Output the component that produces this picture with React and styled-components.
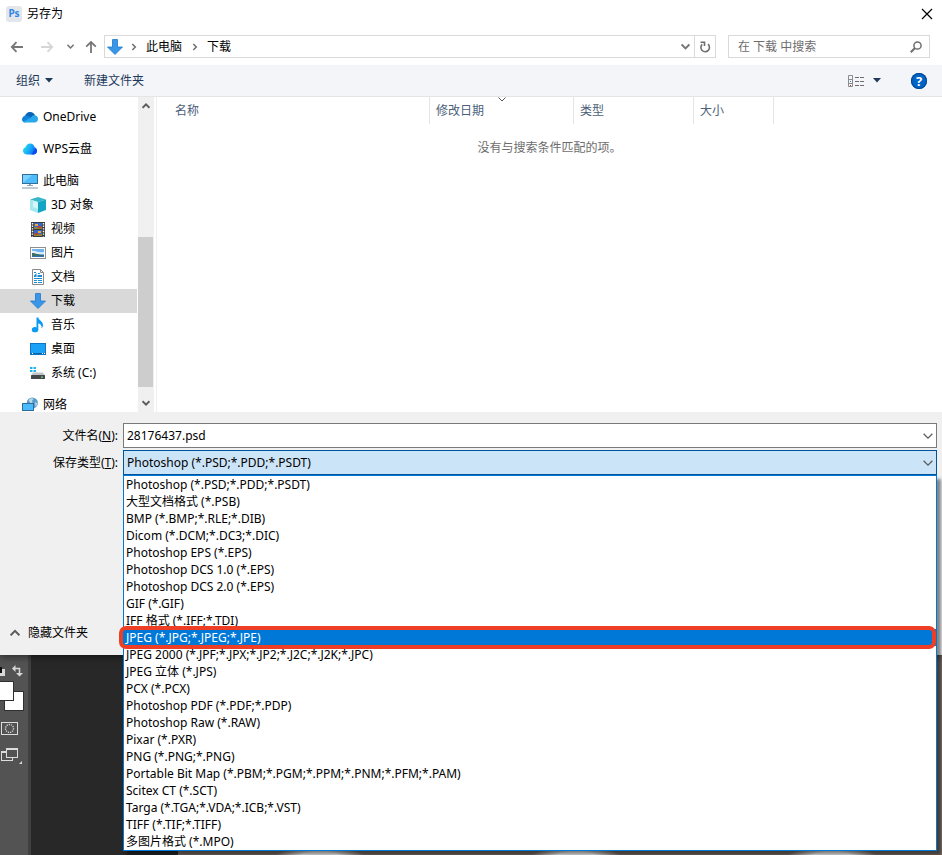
import React, { useState } from "react";
import styled, { createGlobalStyle, css } from "styled-components";

const GlobalStyle = createGlobalStyle`
    * {
        box-sizing: border-box;
    }
    body {
        margin: 0;
        background: #282828;
    }
    body, button, input, select {
        font-family: "Noto Sans", "Noto Sans CJK SC", sans-serif;
        font-size: 12px;
        line-height: 16px;
        color: #000000;
    }
    button {
        border: none;
        background: none;
        padding: 0;
        display: flex;
        align-items: center;
        justify-content: center;
    }
    svg {
        display: block;
        flex-shrink: 0;
    }
`

const Page = styled.div`
    display: flex;
    flex-direction: column;
    min-height: 100vh;
`

const Dialog = styled.main`
    position: relative;
    z-index: 1;
    background: #ffffff;
    box-shadow: 0 1px 8px rgba(0, 0, 0, 0.6);
`

const TitleBar = styled.header`
    display: flex;
    align-items: center;
    height: 28px;
    padding: 0 8px 0 6px;
`

const PsBadge = styled.span`
    width: 16px;
    height: 16px;
    border-radius: 3px;
    background: #e3e6ea;
    color: #2f86e8;
    font-size: 10px;
    font-weight: 700;
    line-height: 15px;
    text-align: center;
`

const Title = styled.h1`
    flex: 1;
    margin: 0 0 0 5px;
    font-size: 12px;
    font-weight: 400;
`

const NavBar = styled.nav`
    display: flex;
    align-items: center;
    height: 37px;
    padding: 0 12px 0 8px;
`

const NavButton = styled.button`
    width: ${(props) => props.$width || 18}px;
    height: 20px;
    margin-right: ${(props) => props.$gap || 0}px;
`

const AddressBar = styled.div`
    display: flex;
    align-items: center;
    flex: 1;
    height: 23px;
    padding-left: 2px;
    border: 1px solid #d9d9d9;
`

const Crumb = styled.a`
    padding: 0 2px;
    color: #000000;
    text-decoration: none;
`

const CrumbArrow = styled.span`
    display: flex;
    justify-content: center;
    width: 21px;
`

const Refresh = styled.button`
    width: 21px;
    height: 21px;
    border-left: 1px solid #d9d9d9;
`

const SearchBox = styled.form`
    display: flex;
    align-items: center;
    width: 202px;
    height: 23px;
    margin-left: 12px;
    padding: 0 6px 0 9px;
    border: 1px solid #d9d9d9;
`

const SearchInput = styled.input`
    flex: 1;
    min-width: 0;
    padding: 0;
    border: none;
    outline: none;
    &::placeholder {
        color: #6d6d6d;
        opacity: 1;
    }
`

const Toolbar = styled.div`
    display: flex;
    align-items: center;
    height: 32px;
    padding: 0 15px 0 16px;
    background: #f4f5f8;
    border-bottom: 1px solid #e5e5e5;
`

const ToolButton = styled.button`
    gap: 5px;
    margin-right: ${(props) => props.$gap || 0}px;
    color: #1e395b;
`

const Spacer = styled.div`
    flex: 1;
`

const HelpButton = styled.button`
    width: 16px;
    height: 16px;
    border-radius: 50%;
    background: #0063c6;
    box-shadow: inset 0 0 0 1px #00458f;
    color: #ffffff;
    font-size: 13px;
    font-weight: 700;
`

const Content = styled.div`
    display: flex;
    height: 315px;
`

const Tree = styled.ul`
    width: 137px;
    margin: 0;
    padding: 8px 0 0;
    list-style: none;
    overflow: hidden;
`

const TreeItem = styled.li`
    margin-top: ${(props) => (props.$spaced ? 8 : 0)}px;
`

const TreeLink = styled.a`
    display: flex;
    align-items: center;
    gap: 5px;
    height: 24px;
    padding-left: ${(props) => (props.$nested ? 30 : 22)}px;
    color: #000000;
    text-decoration: none;
    white-space: nowrap;
    ${(props) => props.$active && css`
        background: #d9d9d9;
    `}
`

const ScrollTrack = styled.div`
    display: flex;
    flex-direction: column;
    width: 16px;
    margin: 0 2px 0 1px;
    background: #f0f0f0;
`

const ScrollButton = styled.button`
    width: 15px;
    height: 18px;
`

const ScrollThumb = styled.div`
    width: 15px;
    height: 150px;
    margin: auto 0 7px;
    background: #cdcdcd;
`

const FilePane = styled.section`
    flex: 1;
    border-left: 1px solid #f0f0f0;
`

const FileTable = styled.table`
    width: 100%;
    table-layout: fixed;
    border-collapse: separate;
    border-spacing: 0;
`

const Column = styled.th`
    position: relative;
    width: ${(props) => (props.$width ? `${props.$width}px` : "auto")};
    height: 27px;
    padding: 0 0 0 ${(props) => props.$indent || 6}px;
    border-right: ${(props) => (props.$width ? "1px solid #e5e5e5" : "none")};
    color: #4c607a;
    font-weight: 400;
    text-align: left;
`

const SortMark = styled.span`
    position: absolute;
    top: 0;
    left: 50%;
    margin-left: -4px;
`

const EmptyCell = styled.td`
    height: 48px;
    padding: 0;
    color: #6d6d6d;
    text-align: center;
`

const Footer = styled.form`
    display: flex;
    flex-direction: column;
    justify-content: space-between;
    min-height: 243px;
    padding: 11px 5px 12px 0;
    background: #f0f0f0;
`

const Fields = styled.div`
    display: grid;
    grid-template-columns: 118px 1fr;
    grid-auto-rows: 25px;
    align-items: center;
    gap: 2px 5px;
`

const Label = styled.label`
    text-align: right;
`

const Combo = styled.div`
    position: relative;
    display: flex;
    height: 25px;
    background: ${(props) => (props.$open ? "#cce4f7" : "#ffffff")};
    border: 1px solid ${(props) => (props.$open ? "#005499" : "#7a7a7a")};
`

const comboText = css`
    flex: 1;
    min-width: 0;
    padding: 0 3px;
    border: none;
    outline: none;
    background: none;
    appearance: none;
`

const NameInput = styled.input`
    ${comboText}
`

const TypeSelect = styled.select`
    ${comboText}
`

const ComboArrow = styled.span`
    display: flex;
    align-items: center;
    padding-right: 3px;
    pointer-events: none;
`

// drops over the dialog and whatever is under it
const TypeList = styled.ul`
    position: absolute;
    top: 24px;
    left: -1px;
    right: -1px;
    margin: 0;
    padding: 0;
    border: 1px solid #0078d7;
    background: #ffffff;
    box-shadow: 4px 4px 3px rgba(0, 0, 0, 0.45);
    list-style: none;
`

const TypeOption = styled.li`
    position: relative;
    height: 17px;
    padding-left: 2px;
    line-height: 17px;
    white-space: nowrap;
    ${(props) => props.$active && css`
        z-index: 1;
        background: #0078d7;
        color: #ffffff;
        &::after {
            content: "";
            position: absolute;
            top: -3px;
            bottom: -3px;
            left: -5px;
            right: 0;
            border: 4px solid #ee3f26;
            border-radius: 7px;
        }
    `}
`

const HideFolders = styled.button`
    align-self: flex-start;
    gap: 8px;
    height: 20px;
    margin-left: 10px;
`

const Workspace = styled.div`
    display: flex;
    flex: 1;
    min-height: 200px;
`

const ToolStrip = styled.aside`
    display: flex;
    flex-direction: column;
    width: 31px;
    padding-top: 6px;
    background: #535353;
    border-right: 3px solid #404040;
`

const StripButton = styled.button`
    justify-content: flex-start;
    margin-bottom: ${(props) => props.$gap || 0}px;
`

const Pasteboard = styled.div`
    width: 147px;
    background: #282828;
`

const Photo = styled.div`
    flex: 1;
    background:
        radial-gradient(ellipse 44px 7px at 50% 100%, #ffffff 40%, transparent) 14px 100% / 256px 100% repeat-x,
        #7d6e66;
`

const Chevron = ({ d, size = 8, color = "#5a5a5a", width = 1.5 }) => (
    <svg width={size} height={size} viewBox="0 0 8 8" fill="none" stroke={color} strokeWidth={width}>
        <path d={d} />
    </svg>
)

const DOWN = "M0.5 2.2 4 5.7 7.5 2.2"
const UP = "M0.5 5.8 4 2.3 7.5 5.8"
const RIGHT = "M2.3 1 5.3 4 2.3 7"

const Caret = () => (
    <svg width="8" height="5" viewBox="0 0 8 5">
        <path d="M0 0h8L4 4.6z" fill="#1e395b" />
    </svg>
)

const ArrowIcon = ({ d, color = "#767676" }) => (
    <svg width="14" height="14" viewBox="0 0 14 14" fill="none" stroke={color} strokeWidth="1.8">
        <path d={d} />
    </svg>
)

const Icon = ({ children }) => (
    <svg width="16" height="16" viewBox="0 0 16 16">{children}</svg>
)

const DownloadIcon = () => (
    <Icon>
        <path d="M5.5 0.5h5v7.5h5L8 15.5 0.5 8h5z" fill="#3a96e8" stroke="#2079c9" strokeWidth="0.8" />
    </Icon>
)

const OneDriveIcon = () => (
    <Icon>
        <path d="M3 8C3 5 5.500 3 8.300 3c2.200 0 4 1.300 4.700 3.200L9 9z" fill="#0a64b8" />
        <path d="M0 10.500C0 8.200 1.800 6.500 4 6.500c1 0 1.800.3 2.500.8L11 10l-8 3.500C1 13.300 0 12 0 10.500z" fill="#1181da" />
        <path d="M12.500 6.200c2 0 3.500 1.700 3.500 3.700s-1.500 3.600-3.500 3.600H3.500c-1 0-1.800-.3-2.400-.8L9 8.500c1-1.400 2-2.300 3.500-2.300z" fill="#28a8ea" />
    </Icon>
)

const WpsIcon = () => (
    <Icon>
        <defs>
            <linearGradient id="wps" x1="0" y1="0.3" x2="1" y2="0.7">
                <stop offset="0" stopColor="#27e0e8" />
                <stop offset="0.55" stopColor="#14a0f8" />
                <stop offset="1" stopColor="#0b4df0" />
            </linearGradient>
        </defs>
        <path d="M5.200 13.500C2.800 13.500 1 11.900 1 9.700 1 8 2 6.800 3.500 6.300 4.200 4 6 2.500 8.200 2.500c2.300 0 3.900 1.500 4.400 3.700 1.500.6 2.400 1.900 2.400 3.500 0 2.200-1.700 3.800-4 3.800z" fill="url(#wps)" />
        <path d="M9.500 13.500 13.200 7.500c1.200.5 1.800 1.300 1.800 2.600 0 2-1.500 3.400-4 3.400z" fill="#0a4cf0" />
    </Icon>
)

const ComputerIcon = () => (
    <Icon>
        <rect x="0.500" y="1.500" width="15" height="9" fill="#4dbcfb" stroke="#2f6f9e" />
        <path d="M1 10V2h9z" fill="#7ed2ff" />
        <path d="M7 11h2v1h2v1H5v-1h2z" fill="#8ba3b5" />
        <path d="M0 15.500v-1h16v1z" fill="#7f97ab" />
    </Icon>
)

const CubeIcon = () => (
    <Icon>
        <path d="M8 0l8 2.500L8 5 0 2.500z" fill="#35b6c9" />
        <path d="M0 2.500 8 5v11l-8-3z" fill="#a5e8ef" />
        <path d="M16 2.500 8 5v11l8-3z" fill="#15a5c4" />
        <path d="M3 4 8 5.500V12L3 10z" fill="#d5f6f9" />
    </Icon>
)

const VideoIcon = () => (
    <Icon>
        <rect x="1" y="1" width="14" height="15" fill="#3b3b3b" />
        <path d="M2.500 2v13.500M13.500 2v13.500" stroke="#ffffff" strokeWidth="1.400" strokeDasharray="1.400 1.200" />
        <rect x="4" y="2" width="8" height="6" fill="#3467c8" />
        <rect x="4" y="9" width="8" height="6" fill="#3467c8" />
        <path d="M5 3h3v2H5zM8 10h3v2H8z" fill="#f1a92c" />
        <path d="M4 6h8v2H4zM4 13h8v2H4z" fill="#8d8340" />
        <path d="M8 5h3v2H8zM5 12h3v2H5z" fill="#c53c2c" />
    </Icon>
)

const PictureIcon = () => (
    <Icon>
        <rect x="0.500" y="2.500" width="15" height="11" fill="#ffffff" stroke="#8f8f8f" />
        <rect x="2" y="4" width="12" height="8" fill="#6fb2ee" />
        <path d="M2 6c3-1 5 2 12 1v2H2z" fill="#dff0fb" />
        <path d="M2 8c4 0 6 2 12 2v2H2z" fill="#3c6f66" />
        <path d="M2 11h12v1H2z" fill="#3070b0" />
    </Icon>
)

const DocumentIcon = () => (
    <Icon>
        <path d="M2.500 0.500h8l3 3v12h-11z" fill="#ffffff" stroke="#8a8a8a" />
        <path d="M10.500 0.500v3h3" fill="none" stroke="#8a8a8a" />
        <path d="M4 3.500h2M8 4.500h2M4 9.500h8M4 11.500h3M8 11.500h4M4 13.500h3M8 13.500h4" stroke="#1b8fd6" />
        <path d="M4 8V6.500L6.500 4v4zM7.500 6H12v2H7.500z" fill="#1b8fd6" />
    </Icon>
)

const MusicIcon = () => (
    <Icon>
        <ellipse cx="5" cy="12.700" rx="3.200" ry="2.600" fill="#0b9bf5" />
        <path d="M6.500 0.500h1.800c.2 2.500 4.700 3.800 4.700 7.500 0 1.500-.7 2.700-1.500 3.500.5-3-1-4.500-3.200-5.200v6.700H6.500z" fill="#0b9bf5" />
    </Icon>
)

const DesktopIcon = () => (
    <Icon>
        <rect x="0.500" y="2.500" width="15" height="11" fill="#1ba1f5" stroke="#0f76c4" />
        <path d="M1 12.500h14" stroke="#0b65ab" />
        <path d="M2 12.500h1M12 12.500h1M14 12.500h1" stroke="#ffffff" />
    </Icon>
)

const DriveIcon = () => (
    <Icon>
        <path d="M0 2h2.500v2H0zM3.500 2H6v2H3.500zM0 5h2.500v2H0zM3.500 5H6v2H3.500z" fill="#18b4f0" />
        <path d="M3 7.500h10l2 3H1z" fill="#c2c5c8" />
        <rect x="1" y="10" width="14" height="4" rx="0.500" fill="#45484b" />
        <rect x="11" y="11.500" width="2" height="1.200" fill="#6be06b" />
    </Icon>
)

const NetworkIcon = () => (
    <Icon>
        <circle cx="10.300" cy="6" r="5.600" fill="#5b9cc9" />
        <path d="M6.500 3c2-2.200 4-2 5-1.500-1 2-2 2-1 4-2 2-3-1-4-2.500zM13 5l2.500 1.500-2 3.500z" fill="#b9d9ea" />
        <rect x="0.500" y="6.500" width="11" height="7" fill="#4bbafa" stroke="#2c6d9d" />
        <path d="M0 15.500h12" stroke="#2c6d9d" />
    </Icon>
)

const places = [
    { name: "OneDrive", icon: OneDriveIcon },
    { name: "WPS云盘", icon: WpsIcon, spaced: true },
    { name: "此电脑", icon: ComputerIcon, spaced: true },
    { name: "3D 对象", icon: CubeIcon, nested: true },
    { name: "视频", icon: VideoIcon, nested: true },
    { name: "图片", icon: PictureIcon, nested: true },
    { name: "文档", icon: DocumentIcon, nested: true },
    { name: "下载", icon: DownloadIcon, nested: true },
    { name: "音乐", icon: MusicIcon, nested: true },
    { name: "桌面", icon: DesktopIcon, nested: true },
    { name: "系统 (C:)", icon: DriveIcon, nested: true },
    { name: "网络", icon: NetworkIcon, spaced: true },
]

const fileTypes = [
    "Photoshop (*.PSD;*.PDD;*.PSDT)",
    "大型文档格式 (*.PSB)",
    "BMP (*.BMP;*.RLE;*.DIB)",
    "Dicom (*.DCM;*.DC3;*.DIC)",
    "Photoshop EPS (*.EPS)",
    "Photoshop DCS 1.0 (*.EPS)",
    "Photoshop DCS 2.0 (*.EPS)",
    "GIF (*.GIF)",
    "IFF 格式 (*.IFF;*.TDI)",
    "JPEG (*.JPG;*.JPEG;*.JPE)",
    "JPEG 2000 (*.JPF;*.JPX;*.JP2;*.J2C;*.J2K;*.JPC)",
    "JPEG 立体 (*.JPS)",
    "PCX (*.PCX)",
    "Photoshop PDF (*.PDF;*.PDP)",
    "Photoshop Raw (*.RAW)",
    "Pixar (*.PXR)",
    "PNG (*.PNG;*.PNG)",
    "Portable Bit Map (*.PBM;*.PGM;*.PPM;*.PNM;*.PFM;*.PAM)",
    "Scitex CT (*.SCT)",
    "Targa (*.TGA;*.VDA;*.ICB;*.VST)",
    "TIFF (*.TIF;*.TIFF)",
    "多图片格式 (*.MPO)",
]

const Navigation = () => (
    <NavBar>
        <NavButton $gap={12} aria-label="后退"><ArrowIcon d="M13 7H2M6.500 2.200 1.800 7l4.700 4.800" /></NavButton>
        <NavButton $gap={8} aria-label="前进" disabled><ArrowIcon color="#d6d6d6" d="M1 7h11M7.500 2.200 12.200 7l-4.700 4.800" /></NavButton>
        <NavButton $width={12} $gap={6} aria-label="最近的位置"><Chevron size={7} d={DOWN} color="#767676" width={1.8} /></NavButton>
        <NavButton $gap={4} aria-label="上移"><ArrowIcon d="M7 13V2M2.200 6.700 7 2l4.800 4.700" /></NavButton>
        <AddressBar>
            <DownloadIcon />
            <CrumbArrow><Chevron d={RIGHT} color="#6e6e6e" /></CrumbArrow>
            <Crumb href="#pc">此电脑</Crumb>
            <CrumbArrow><Chevron d={RIGHT} color="#6e6e6e" /></CrumbArrow>
            <Crumb href="#downloads">下载</Crumb>
            <Spacer />
            <NavButton aria-label="以前的位置"><Chevron size={9} d={DOWN} color="#767676" width={1.8} /></NavButton>
            <Refresh aria-label="刷新">
                <svg width="12" height="12" viewBox="0 0 12 12" fill="none" stroke="#6e6e6e" strokeWidth="1.600">
                    <path d="M9 3.200A4.300 4.300 0 1 1 3.200 3.300" />
                    <path d="M1.500 1.200h4v3.800" />
                </svg>
            </Refresh>
        </AddressBar>
        <SearchBox onSubmit={(e) => e.preventDefault()}>
            <SearchInput aria-label="搜索" placeholder="在 下载 中搜索" />
            <button aria-label="开始搜索">
                <svg width="14" height="14" viewBox="0 0 14 14" fill="none" stroke="#6e6e6e" strokeWidth="1.500">
                    <circle cx="8.500" cy="5.500" r="3.600" />
                    <path d="M6 8 1.800 12.200" strokeWidth="2" />
                </svg>
            </button>
        </SearchBox>
    </NavBar>
)

const Sidebar = () => (
    <>
        <Tree>
            {places.map(({ name, icon: PlaceIcon, spaced, nested }) => (
                <TreeItem key={name} $spaced={spaced}>
                    <TreeLink href="#place" $nested={nested} $active={name === "下载"}>
                        <PlaceIcon />
                        {name}
                    </TreeLink>
                </TreeItem>
            ))}
        </Tree>
        <ScrollTrack>
            <ScrollButton aria-label="向上滚动"><Chevron d={UP} width={2} /></ScrollButton>
            <ScrollThumb />
            <ScrollButton aria-label="向下滚动"><Chevron d={DOWN} width={2} /></ScrollButton>
        </ScrollTrack>
    </>
)

const Files = () => (
    <FilePane>
        <FileTable>
            <thead>
                <tr>
                    <Column $width={273} $indent={18}>名称</Column>
                    <Column $width={144}>
                        修改日期
                        <SortMark><Chevron d="M0.500 0.500 4 4 7.500 0.500" width={1} /></SortMark>
                    </Column>
                    <Column $width={120}>类型</Column>
                    <Column $width={80}>大小</Column>
                    <Column as="td" />
                </tr>
            </thead>
            <tbody>
                <tr>
                    <EmptyCell colSpan={5}>没有与搜索条件匹配的项。</EmptyCell>
                </tr>
            </tbody>
        </FileTable>
    </FilePane>
)

const Tools = () => (
    <ToolStrip>
        <StripButton $gap={1} aria-label="切换前景色和背景色">
            <svg width="28" height="18" viewBox="0 0 28 18">
                <path d="M0 8h5v7H0z" fill="#d8d8d8" />
                <path d="M0 6h2v6H0z" fill="#111111" />
                <path d="M15 7.500h4.500V12" fill="none" stroke="#d8d8d8" strokeWidth="1.500" />
                <path d="M12 7.500 15.500 4v7zM19.500 15.500 16 12h7z" fill="#d8d8d8" />
            </svg>
        </StripButton>
        <StripButton $gap={6} aria-label="设置前景色">
            <svg width="28" height="32" viewBox="0 0 28 32" fill="#ffffff" stroke="#303030">
                <rect x="4.500" y="11.500" width="19" height="19" />
                <rect x="-6.500" y="1.500" width="20" height="19" />
            </svg>
        </StripButton>
        <StripButton $gap={8} aria-label="快速蒙版">
            <svg width="28" height="20" viewBox="0 0 28 20" fill="none" stroke="#dcdcdc">
                <rect x="1.500" y="4.500" width="16" height="12" />
                <circle cx="9.500" cy="10.500" r="4" strokeWidth="1.300" strokeDasharray="1.200 1" />
            </svg>
        </StripButton>
        <StripButton aria-label="屏幕模式">
            <svg width="28" height="20" viewBox="0 0 28 20" stroke="#dcdcdc" fill="#535353">
                <rect x="1.500" y="5.500" width="11" height="9" />
                <path d="M1 6h5" strokeWidth="2" />
                <rect x="6.500" y="2.500" width="11" height="9" />
                <path d="M6 3h12" strokeWidth="2" />
                <path d="M22 15v3h-3z" fill="#dcdcdc" stroke="none" />
            </svg>
        </StripButton>
    </ToolStrip>
)

const App = () => {
    const [fileName, setFileName] = useState("28176437.psd")
    const [fileType, setFileType] = useState(fileTypes[0])
    const [hovered, setHovered] = useState(9)

    return (
        <Page>
            <GlobalStyle />
            <Dialog>
                <TitleBar>
                    <PsBadge>Ps</PsBadge>
                    <Title>另存为</Title>
                    <button aria-label="关闭">
                        <svg width="14" height="14" viewBox="0 0 14 14" stroke="#000000" strokeWidth="1.200">
                            <path d="M2 2l10 10M12 2 2 12" />
                        </svg>
                    </button>
                </TitleBar>
                <Navigation />
                <Toolbar>
                    <ToolButton $gap={31}>组织<Caret /></ToolButton>
                    <ToolButton>新建文件夹</ToolButton>
                    <Spacer />
                    <ToolButton $gap={30} aria-label="更改视图">
                        <svg width="20" height="14" viewBox="0 0 20 14" fill="none" stroke="#8c8c8c">
                            <path d="M0.500 1.500h4v11h-4zM0.500 5.500h4M0.500 9.500h4" />
                            <path d="M7 3.500h4M12 3.500h4M7 7.500h4M12 7.500h4M7 11.500h4M12 11.500h4" stroke="#6e6e6e" />
                            <path d="M2 7.500h1" stroke="#2a7fd0" />
                            <path d="M2 11.500h1" stroke="#d03030" />
                        </svg>
                        <Caret />
                    </ToolButton>
                    <HelpButton aria-label="帮助">?</HelpButton>
                </Toolbar>
                <Content>
                    <Sidebar />
                    <Files />
                </Content>
                <Footer onSubmit={(e) => e.preventDefault()}>
                    <Fields>
                        <Label htmlFor="file-name">文件名(<u>N</u>):</Label>
                        <Combo>
                            <NameInput id="file-name" value={fileName} onChange={(e) => setFileName(e.target.value)} />
                            <ComboArrow><Chevron size={10} d={DOWN} width={1} /></ComboArrow>
                        </Combo>
                        <Label htmlFor="file-type">保存类型(<u>T</u>):</Label>
                        <Combo $open>
                            <TypeSelect id="file-type" value={fileType} onChange={(e) => setFileType(e.target.value)}>
                                {fileTypes.map((type) => <option key={type}>{type}</option>)}
                            </TypeSelect>
                            <ComboArrow><Chevron size={10} d={DOWN} width={1} /></ComboArrow>
                            <TypeList role="listbox" aria-label="保存类型">
                                {fileTypes.map((type, i) => (
                                    <TypeOption
                                        key={type}
                                        role="option"
                                        aria-selected={i === hovered}
                                        $active={i === hovered}
                                        onMouseEnter={() => setHovered(i)}
                                        onClick={() => setFileType(type)}
                                    >
                                        {type}
                                    </TypeOption>
                                ))}
                            </TypeList>
                        </Combo>
                    </Fields>
                    <HideFolders type="button"><Chevron size={10} d={UP} width={1.6} />隐藏文件夹</HideFolders>
                </Footer>
            </Dialog>
            <Workspace>
                <Tools />
                <Pasteboard />
                <Photo />
            </Workspace>
        </Page>
    )
}

export default App
